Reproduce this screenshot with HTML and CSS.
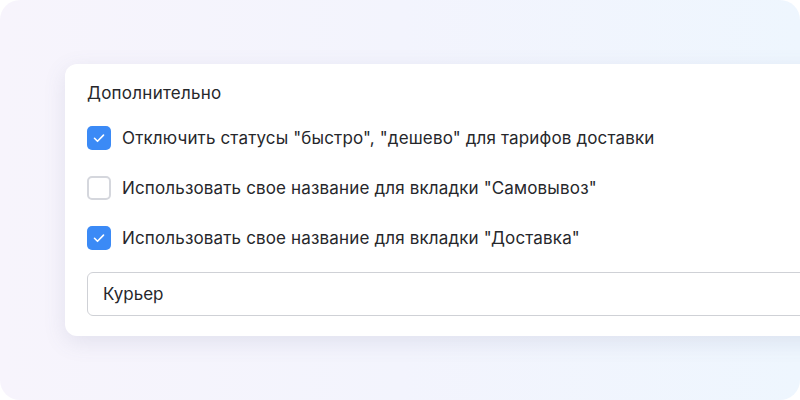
FILE: index.html
```html
<!DOCTYPE html>
<html lang="ru">
<head>
<meta charset="utf-8">
<link rel="stylesheet" href="styles.css">
</head>
<body>
<div class="frame">
  <div class="card">
    <div class="title">Дополнительно</div>
    <div class="options">
      <label class="row">
        <span class="box checked"><svg viewBox="0 0 24 24" width="24" height="24"><path d="M7.5 12.3l3 3 6-6.2" fill="none" stroke="#fff" stroke-width="1.6" stroke-linecap="round" stroke-linejoin="round"/></svg></span>
        <span class="text">Отключить статусы "быстро", "дешево" для тарифов доставки</span>
      </label>
      <label class="row">
        <span class="box"></span>
        <span class="text">Использовать свое название для вкладки "Самовывоз"</span>
      </label>
      <label class="row">
        <span class="box checked"><svg viewBox="0 0 24 24" width="24" height="24"><path d="M7.5 12.3l3 3 6-6.2" fill="none" stroke="#fff" stroke-width="1.6" stroke-linecap="round" stroke-linejoin="round"/></svg></span>
        <span class="text">Использовать свое название для вкладки "Доставка"</span>
      </label>
    </div>
    <div class="input">Курьер</div>
  </div>
</div>
</body>
</html>
```
FILE: styles.css
```css
html, body {
  margin: 0;
  padding: 0;
  background: #ffffff;
}
body {
  width: 800px;
  height: 400px;
  overflow: hidden;
  font-family: Inter, "Noto Sans", sans-serif;
  color: #26272b;
}
.frame {
  width: 800px;
  height: 400px;
  border-radius: 20px;
  overflow: hidden;
  background: linear-gradient(90deg, #f7f4fc 0%, #f3f4fd 50%, #eef6fe 100%);
  padding: 64px 0 0 65px;
  box-sizing: border-box;
}
.card {
  width: 780px;
  background: #ffffff;
  border-radius: 12px;
  box-shadow: 0 6px 22px rgba(90, 100, 140, 0.13);
  padding: 19px 22px 20px 22px;
  box-sizing: border-box;
}
.title {
  font-size: 17px;
  line-height: 20px;
  letter-spacing: 0.25px;
  color: #26272b;
}
.options {
  margin-top: 23px;
  display: flex;
  flex-direction: column;
  gap: 26px;
}
.row {
  display: flex;
  align-items: center;
  gap: 11px;
  height: 24px;
}
.box {
  width: 24px;
  height: 24px;
  box-sizing: border-box;
  border: 2px solid #d5d7dd;
  border-radius: 5px;
  flex: none;
  display: flex;
}
.box.checked {
  border: none;
  background: #3b8af6;
}
.text {
  font-size: 17px;
  line-height: 24px;
  letter-spacing: 0.15px;
  color: #26272b;
}
.input {
  margin-top: 22px;
  height: 44px;
  box-sizing: border-box;
  border: 1px solid #cfd1d6;
  border-radius: 6px;
  padding: 0 15px;
  display: flex;
  align-items: center;
  font-size: 17px;
  color: #26272b;
  margin-right: -40px;
}
```
